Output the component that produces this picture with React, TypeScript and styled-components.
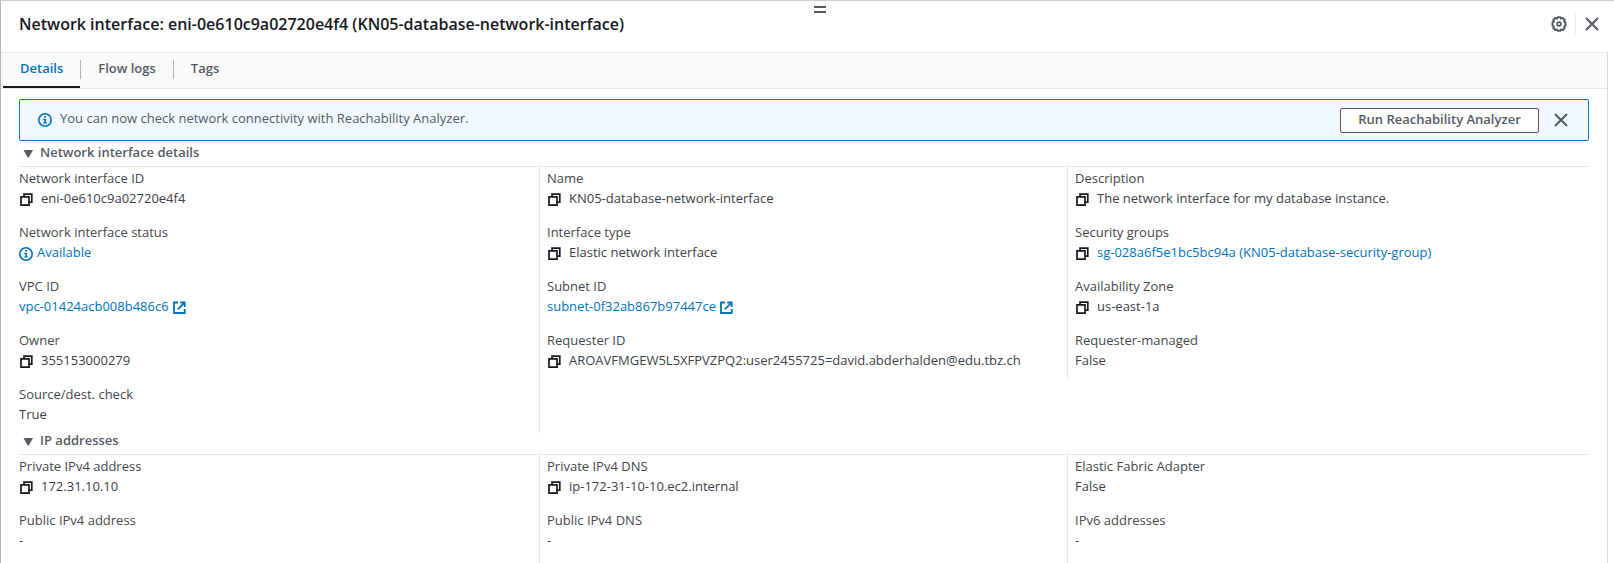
import React, { useState } from "react";
import styled, { createGlobalStyle } from "styled-components";

const color = {
  ink: "#16191f",
  value: "#3c4148",
  label: "#44484e",
  muted: "#545b64",
  link: "#0073bb",
  rule: "#e6e9e9",
  edge: "#aab7b8",
};

const GlobalStyle = createGlobalStyle`
  *, *::before, *::after { box-sizing: border-box; }
  body {
    margin: 0;
    background: #fff;
    color: ${color.value};
    font-family: "Open Sans", "Noto Sans", sans-serif;
    font-size: 13px;
    line-height: 20px;
  }
  button {
    padding: 0;
    border: 0;
    background: none;
    color: inherit;
    font: inherit;
    cursor: pointer;
  }
  svg { display: block; flex: none; }
`;

const Panel = styled.section`
  position: relative;
  display: flex;
  flex-direction: column;
  height: 100vh;
  overflow: hidden;
  border-top: 1px solid #c8cecf;
  border-left: 1px solid ${color.edge};
`;

const Header = styled.header`
  display: flex;
  align-items: center;
  flex: none;
  height: 51px;
  padding: 0 15px 5px 18px;
`;

const Title = styled.h1`
  flex: 1;
  margin: 0;
  color: ${color.ink};
  font-size: 16px;
  font-weight: 600;
  line-height: 20px;
`;

const HeaderActions = styled.div`
  display: flex;
  align-items: center;
  color: ${color.muted};
`;

const IconButton = styled.button`
  display: flex;
  align-items: center;
  justify-content: center;
  color: ${color.muted};
`;

const Divider = styled.span`
  width: 1px;
  height: 20px;
  margin: 0 9px 0 8px;
  background: ${color.rule};
`;

const DragHandle = styled.button`
  position: absolute;
  top: 5px;
  left: calc(50% + 6px);
  width: 12px;
  height: 7px;
  border-top: 2px solid ${color.muted};
  border-bottom: 2px solid ${color.muted};
  cursor: row-resize;
`;

const Scroller = styled.div`
  display: flex;
  flex: 1;
  flex-direction: column;
  min-height: 0;
  margin-right: 6px;
  border-right: 1px solid #d5dbdb;
`;

const TabBar = styled.div`
  display: flex;
  flex: none;
  height: 37px;
  padding-left: 2px;
  border-top: 1px solid ${color.rule};
  border-bottom: 1px solid ${color.rule};
  background: #fafafa;
`;

const Tab = styled.button<{ $active: boolean }>`
  display: flex;
  align-items: flex-start;
  padding: 5px 17px 0 17px;
  border-bottom: 2px solid ${(p) => (p.$active ? color.ink : "transparent")};
  color: ${(p) => (p.$active ? color.link : color.muted)};
  font-size: 13px;
  font-weight: 600;
`;

const TabDivider = styled.span`
  width: 1px;
  height: 19px;
  margin-top: 7px;
  background: ${color.edge};
`;

const Body = styled.main`
  display: flex;
  flex: 1;
  flex-direction: column;
  padding: 10px 18px 0;
`;

const Notice = styled.div`
  display: flex;
  align-items: center;
  flex: none;
  min-height: 42px;
  margin-bottom: 4px;
  padding: 0 20px 0 18px;
  border: 1px solid ${color.link};
  border-radius: 2px;
  background: #f1f9ff;
  color: ${color.muted};
`;

const NoticeIcon = styled.span`
  color: ${color.link};
`;

const NoticeText = styled.p`
  flex: 1;
  margin: 0 0 4px 8px;
`;

const OutlineButton = styled.button`
  width: 199px;
  height: 25px;
  margin-right: 15px;
  padding-bottom: 4px;
  border: 1px solid ${color.muted};
  border-radius: 2px;
  background: #fff;
  color: ${color.muted};
  font-weight: 600;
  line-height: 20px;
`;

const Group = styled.section<{ $fill?: boolean }>`
  display: flex;
  flex: ${(p) => (p.$fill ? "1" : "none")};
  flex-direction: column;
`;

const GroupHeading = styled.h2`
  margin: 0;
  border-bottom: 1px solid ${color.rule};
  font-size: 13px;
  line-height: 16px;
`;

const GroupToggle = styled.button`
  display: flex;
  align-items: center;
  gap: 8px;
  height: 21px;
  padding: 0 0 8px 5px;
  color: ${color.muted};
  font-weight: 600;
`;

const Columns = styled.div<{ $fill?: boolean }>`
  display: grid;
  grid-template-columns: repeat(3, minmax(0, 1fr));
  align-items: ${(p) => (p.$fill ? "stretch" : "start")};
  flex: ${(p) => (p.$fill ? "1" : "none")};
  margin: -4px -7px 0;
`;

const Column = styled.dl`
  margin: 0;
  border-right: 1px solid ${color.rule};
  &:last-child { border-right-color: transparent; }
`;

const Item = styled.div`
  height: 54px;
  padding: 5px 7px 0;
`;

const Label = styled.dt`
  color: ${color.label};
`;

const Value = styled.dd`
  display: flex;
  align-items: flex-start;
  margin: 0;
  white-space: nowrap;
`;

const CopyButton = styled.button`
  margin: 5px 8px 0 1px;
  color: ${color.ink};
`;

const Link = styled.a`
  display: flex;
  gap: 4px;
  color: ${color.link};
  text-decoration: none;
  svg { margin-top: 5px; }
`;

const CopyIcon = () => (
  <svg width="13" height="13" viewBox="0 0 13 13" fill="none" stroke="currentColor" strokeWidth="1.700">
    <path d="M4 3.800V1.200h7.800v7.900H9.300" />
    <path d="M1 3.900h8v8.200H1z" />
  </svg>
);

const ExternalIcon = () => (
  <svg width="13" height="13" viewBox="0 0 13 13" fill="none" stroke="currentColor" strokeWidth="1.800">
    <path d="M5 1.500H1v10.500h10.700V8M7.300 1.500h5.200M11.700 1v5M11.500 1.700L4.800 8.400" />
  </svg>
);

const InfoIcon = () => (
  <svg width="14" height="14" viewBox="0 0 14 14" fill="none" stroke="currentColor">
    <circle cx="7" cy="7" r="6.200" strokeWidth="1.600" />
    <path d="M6 3.700h2" strokeWidth="1.600" />
    <path d="M5.200 6.400h2.300M5 10h4" strokeWidth="1.200" />
    <path d="M7.200 6v4" strokeWidth="1.700" />
  </svg>
);

const CloseIcon = () => (
  <svg width="14" height="14" viewBox="0 0 14 14" fill="none" stroke="currentColor" strokeWidth="2">
    <path d="M1 1l12 12M13 1L1 13" />
  </svg>
);

const GearIcon = () => (
  <svg width="16" height="16" viewBox="0 0 16 16" fill="none" stroke="currentColor" strokeWidth="2">
    <path
      strokeLinejoin="round"
      d="M6.600 1.300h2.800l.6 1.300 1.700-.6 2 2-.6 1.700 1.400.6v3.400l-1.400.6.6 1.700-2 2-1.700-.6-.6 1.300H6.600L6 13.400l-1.700.6-2-2 .6-1.700-1.400-.6V6.300l1.400-.6L2.300 4l2-2 1.700.6z"
    />
    <circle cx="8" cy="8" r="1.900" strokeWidth="1.800" />
  </svg>
);

const TriangleIcon = () => (
  <svg width="8" height="8" viewBox="0 0 8 8" fill="currentColor" overflow="visible">
    <path d="M-.5 2h9.500L4.800 9.500H3.700z" />
  </svg>
);

type Entry = {
  label: string;
  value: string;
  copy?: boolean;
  link?: boolean;
  icon?: "info" | "external";
};

const details: Entry[][] = [
  [
    { label: "Network interface ID", value: "eni-0e610c9a02720e4f4", copy: true },
    { label: "Network interface status", value: "Available", link: true, icon: "info" },
    { label: "VPC ID", value: "vpc-01424acb008b486c6", link: true, icon: "external" },
    { label: "Owner", value: "355153000279", copy: true },
    { label: "Source/dest. check", value: "True" },
  ],
  [
    { label: "Name", value: "KN05-database-network-interface", copy: true },
    { label: "Interface type", value: "Elastic network interface", copy: true },
    { label: "Subnet ID", value: "subnet-0f32ab867b97447ce", link: true, icon: "external" },
    {
      label: "Requester ID",
      value: "AROAVFMGEW5L5XFPVZPQ2:user2455725=david.abderhalden@edu.tbz.ch",
      copy: true,
    },
  ],
  [
    { label: "Description", value: "The network interface for my database instance.", copy: true },
    {
      label: "Security groups",
      value: "sg-028a6f5e1bc5bc94a (KN05-database-security-group)",
      copy: true,
      link: true,
    },
    { label: "Availability Zone", value: "us-east-1a", copy: true },
    { label: "Requester-managed", value: "False" },
  ],
];

const addresses: Entry[][] = [
  [
    { label: "Private IPv4 address", value: "172.31.10.10", copy: true },
    { label: "Public IPv4 address", value: "-" },
  ],
  [
    { label: "Private IPv4 DNS", value: "ip-172-31-10-10.ec2.internal", copy: true },
    { label: "Public IPv4 DNS", value: "-" },
  ],
  [
    { label: "Elastic Fabric Adapter", value: "False" },
    { label: "IPv6 addresses", value: "-" },
  ],
];

function Field({ label, value, copy, link, icon }: Entry) {
  return (
    <Item>
      <Label>{label}</Label>
      <Value>
        {copy && (
          <CopyButton type="button" aria-label={`Copy ${label}`}>
            <CopyIcon />
          </CopyButton>
        )}
        {link ? (
          <Link href="#">
            {icon === "info" && <InfoIcon />}
            {value}
            {icon === "external" && <ExternalIcon />}
          </Link>
        ) : (
          value
        )}
      </Value>
    </Item>
  );
}

function FieldGroup({ title, columns, fill }: { title: string; columns: Entry[][]; fill?: boolean }) {
  const [open, setOpen] = useState(true);
  return (
    <Group $fill={fill}>
      <GroupHeading>
        <GroupToggle type="button" aria-expanded={open} onClick={() => setOpen(!open)}>
          <TriangleIcon />
          {title}
        </GroupToggle>
      </GroupHeading>
      {open && (
        <Columns $fill={fill}>
          {columns.map((entries, i) => (
            <Column key={i}>
              {entries.map((entry) => (
                <Field key={entry.label} {...entry} />
              ))}
            </Column>
          ))}
        </Columns>
      )}
    </Group>
  );
}

const tabs = ["Details", "Flow logs", "Tags"];

export default function App() {
  const [active, setActive] = useState(tabs[0]);
  const [notice, setNotice] = useState(true);
  return (
    <>
      <GlobalStyle />
      <Panel>
        <DragHandle type="button" aria-label="Resize panel" />
        <Header>
          <Title>Network interface: eni-0e610c9a02720e4f4 (KN05-database-network-interface)</Title>
          <HeaderActions>
            <IconButton type="button" aria-label="Preferences">
              <GearIcon />
            </IconButton>
            <Divider />
            <IconButton type="button" aria-label="Close panel">
              <CloseIcon />
            </IconButton>
          </HeaderActions>
        </Header>
        <Scroller>
          <TabBar role="tablist">
            {tabs.map((name, i) => (
              <React.Fragment key={name}>
                {i > 0 && <TabDivider />}
                <Tab
                  type="button"
                  role="tab"
                  aria-selected={name === active}
                  $active={name === active}
                  onClick={() => setActive(name)}
                >
                  {name}
                </Tab>
              </React.Fragment>
            ))}
          </TabBar>
          <Body>
            {notice && (
              <Notice>
                <NoticeIcon>
                  <InfoIcon />
                </NoticeIcon>
                <NoticeText>You can now check network connectivity with Reachability Analyzer.</NoticeText>
                <OutlineButton type="button">Run Reachability Analyzer</OutlineButton>
                <IconButton type="button" aria-label="Dismiss" onClick={() => setNotice(false)}>
                  <CloseIcon />
                </IconButton>
              </Notice>
            )}
            <FieldGroup title="Network interface details" columns={details} />
            <FieldGroup title="IP addresses" columns={addresses} fill />
          </Body>
        </Scroller>
      </Panel>
    </>
  );
}
